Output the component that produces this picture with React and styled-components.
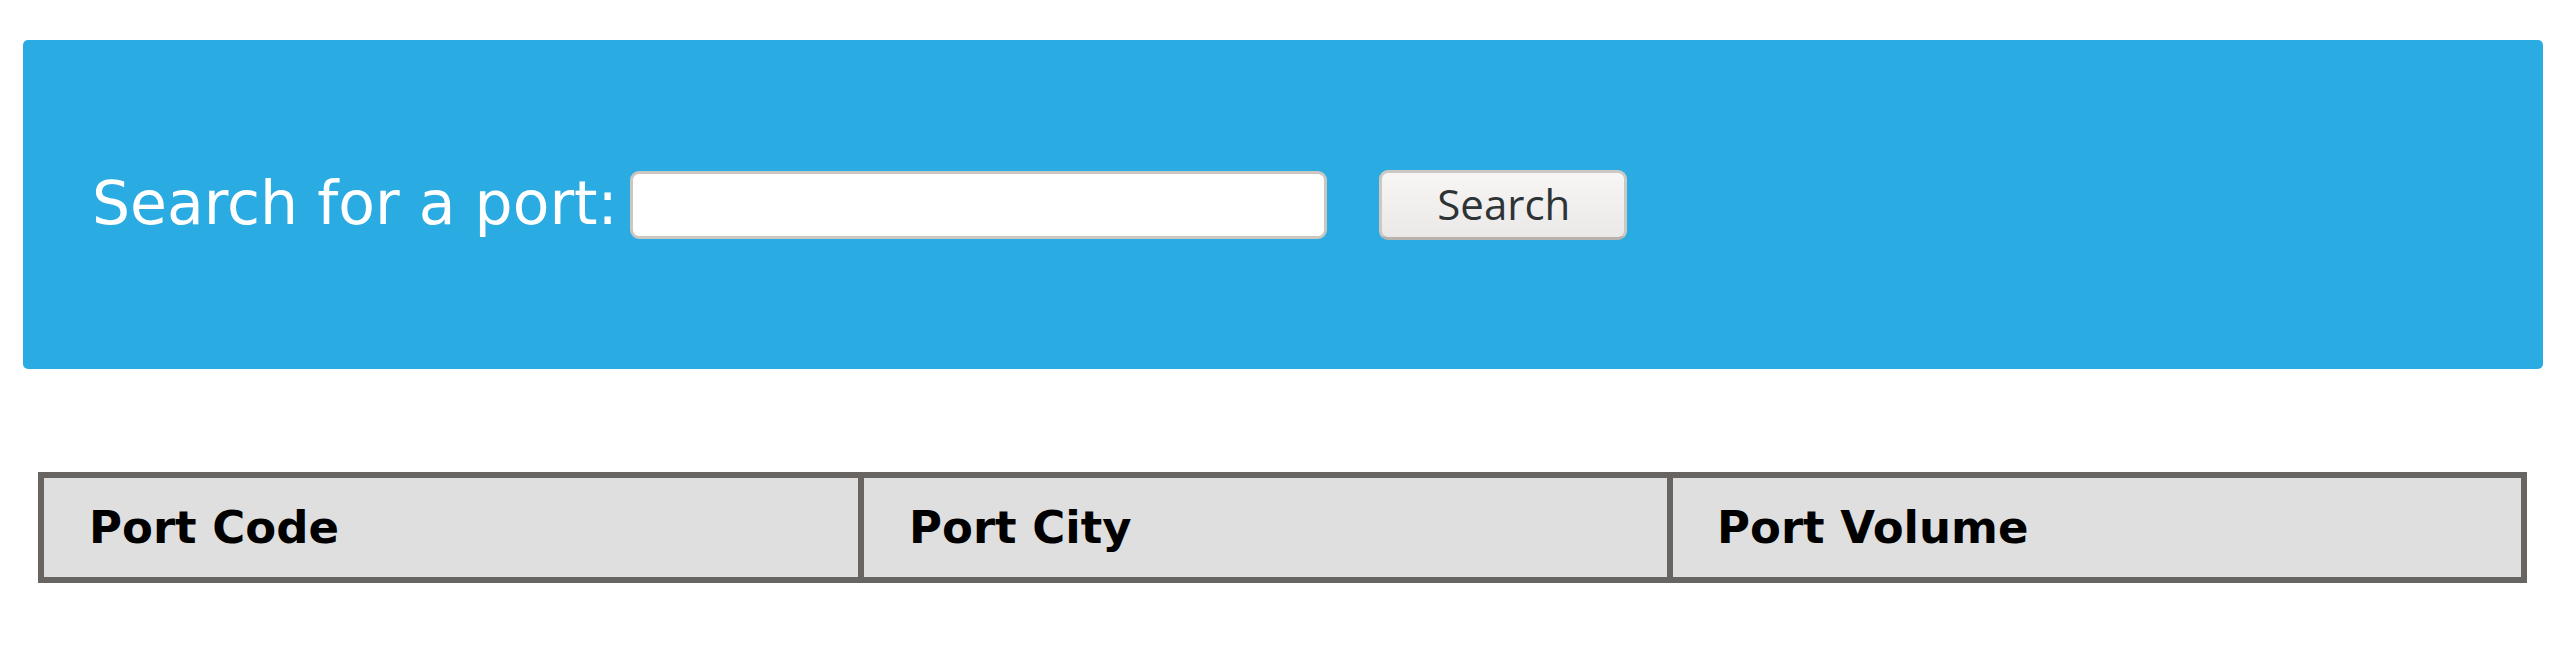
import styled, { createGlobalStyle } from 'styled-components'

const GlobalStyle = createGlobalStyle`
    html, body {
        margin: 0;
        padding: 0;
        background: #ffffff;
    }
    body {
        font-family: "DejaVu Sans", Verdana, sans-serif;
    }
`

const Page = styled.div`
    width: 2572px;
    padding-top: 40px;
    box-sizing: border-box;
`

const SearchPanel = styled.section`
    margin: 0 29px 0 23px;
    height: 329px;
    background-color: #2aabe2;
    border-radius: 5px;
    display: flex;
    align-items: center;
    padding-left: 69px;
    box-sizing: border-box;
`

const Label = styled.label`
    color: #ffffff;
    font-size: 60px;
    line-height: 70px;
    margin-right: 12px;
    margin-top: -4px;
`

const SearchInput = styled.input`
    width: 697px;
    height: 68px;
    box-sizing: border-box;
    border: 3px solid #cbc6c1;
    border-radius: 9px;
    background: #ffffff;
    outline: none;
    padding: 0 12px;
    font-size: 40px;
`

const SearchButton = styled.button`
    margin-left: 52px;
    width: 248px;
    height: 70px;
    box-sizing: border-box;
    border: 3px solid #cdc8c3;
    border-bottom-color: #b7b2ad;
    border-radius: 9px;
    background: linear-gradient(to bottom, #f7f6f5, #ebe9e7);
    color: #2e3436;
    font-family: "Open Sans", sans-serif;
    font-size: 42px;
    padding: 0 0 2px 2px;
    cursor: pointer;
`

const PortTable = styled.table`
    margin: 103px 0 0 38px;
    border-collapse: separate;
    border-spacing: 0;
    border: 6px solid #676462;
    table-layout: fixed;
`

const HeadCell = styled.th`
    width: ${(props) => props.w}px;
    background-color: #dfdfdf;
    color: #000000;
    font-weight: bold;
    font-size: 45px;
    line-height: 51px;
    text-align: left;
    padding: 24px ${(props) => props.pad || 45}px;
    box-sizing: border-box;
    & + & {
        border-left: 6px solid #676462;
    }
`

const columns = [
    { label: 'Port Code', w: 814 },
    { label: 'Port City', w: 809 },
    { label: 'Port Volume', w: 854, pad: 44 },
]

const App = () => {
    return (
        <Page>
            <GlobalStyle />
            <SearchPanel>
                <Label htmlFor="port">Search for a port:</Label>
                <SearchInput id="port" type="text" />
                <SearchButton>Search</SearchButton>
            </SearchPanel>
            <PortTable>
                <thead>
                    <tr>
                        {columns.map((c) => (
                            <HeadCell key={c.label} w={c.w} pad={c.pad}>
                                {c.label}
                            </HeadCell>
                        ))}
                    </tr>
                </thead>
            </PortTable>
        </Page>
    )
}

export default App
